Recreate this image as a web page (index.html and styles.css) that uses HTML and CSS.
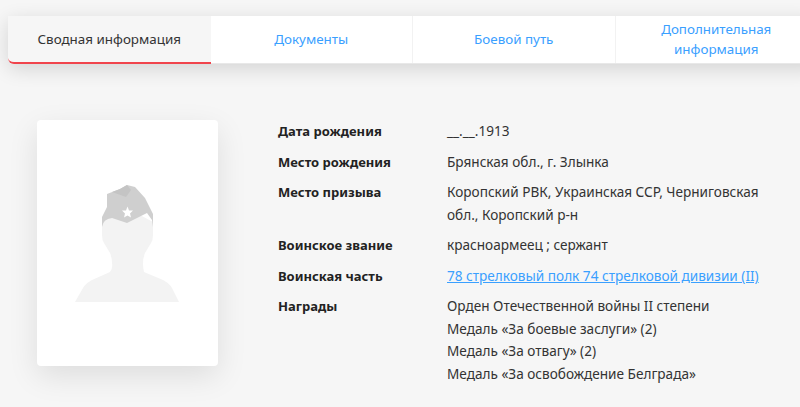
FILE: index.html
```html
<!DOCTYPE html>
<html lang="ru">
<head>
    <meta charset="UTF-8">
    <title>Сводная информация</title>
    <link rel="stylesheet" href="styles.css">
</head>
<body>
    <nav class="tabs">
        <a class="tab tab-active">Сводная информация</a>
        <a class="tab">Документы</a>
        <a class="tab">Боевой путь</a>
        <a class="tab">Дополнительная<br>информация</a>
    </nav>

    <main class="person">
        <div class="photo">
            <svg class="silhouette" viewBox="75 185 104 117" width="104" height="117" aria-hidden="true">
                <path fill="#f3f3f3" d="M75 302 L83 288 Q86 283 92 280 L110 272 Q113 268 112 263 Q112 258 110 253 L104 243 Q102 240 102 235 L102 222 L127 208 L153 222 L153 235 Q153 240 151 243 L145 253 Q143 258 143 263 Q143 268 144 272 L163 280 Q169 283 172 288 L179 302 Z"/>
                <path fill="#cfcfcf" d="M102 227 L102 217 L107 207 L107 194 L120 189 L127 185 L135 187 L145 198 L153 214 L153 227 L152 220 L147 213 L127 223 L112 218 Q103 219 102 227 Z"/>
                <path fill="#c4c4c4" d="M112 192 L120 189 L127 185 L131 190 L126 197 Z"/>
                <path fill="#fff" d="M127.500 206.500 L129 210.500 L133 210.500 L130 213.500 L131 217.500 L127.500 215.500 L124 217.500 L125 213.500 L122 210.500 L126 210.500 Z"/>
            </svg>
        </div>

        <div class="info">
            <div class="info-row">
                <div class="info-label">Дата рождения</div>
                <div class="info-value">__.__.1913</div>
            </div>
            <div class="info-row">
                <div class="info-label">Место рождения</div>
                <div class="info-value">Брянская обл., г. Злынка</div>
            </div>
            <div class="info-row">
                <div class="info-label">Место призыва</div>
                <div class="info-value">Коропский РВК, Украинская ССР, Черниговская обл., Коропский р-н</div>
            </div>
            <div class="info-row">
                <div class="info-label">Воинское звание</div>
                <div class="info-value">красноармеец ; сержант</div>
            </div>
            <div class="info-row">
                <div class="info-label">Воинская часть</div>
                <div class="info-value"><a class="info-link">78 стрелковый полк 74 стрелковой дивизии (II)</a></div>
            </div>
            <div class="info-row">
                <div class="info-label">Награды</div>
                <div class="info-value">
                    <div>Орден Отечественной войны II степени</div>
                    <div>Медаль «За боевые заслуги» (2)</div>
                    <div>Медаль «За отвагу» (2)</div>
                    <div>Медаль «За освобождение Белграда»</div>
                </div>
            </div>
        </div>
    </main>
</body>
</html>
```

FILE: styles.css
```css
:root {
    --text-color: #333333;
    --link-color: #3aa0ff;
    --bg-color: #f6f6f6;
}

html, body {
    height: 100%;
}

body {
    margin: 0;
    overflow: hidden;
    background-color: var(--bg-color);
    color: var(--text-color);
    font-family: "Noto Sans", sans-serif;
    font-size: 13.600px;
    line-height: 22.500px;
}

.tabs {
    display: grid;
    grid-template-columns: repeat(4, 202.500px);
    width: 810px;
    height: 47px;
    margin: 16px 0 0 8px;
    background-color: white;
    box-shadow: 0 5px 20px rgba(0, 0, 0, 0.14);
    border-bottom: 1px solid #e8e8e8;
    border-radius: 0 0 0 6px;
}

.tab {
    display: flex;
    align-items: center;
    justify-content: center;
    padding-bottom: 1px;
    text-align: center;
    font-size: 13.400px;
    line-height: 20px;
    color: var(--link-color);
    border-right: 1px solid #f2f2f2;
}

.tab-active {
    background-color: var(--bg-color);
    color: var(--text-color);
    border-right: none;
    border-bottom: 2px solid #f0444c;
    border-radius: 0 0 0 6px;
    margin-bottom: -1px;
}

.person {
    display: flex;
    margin: 56px 0 0 37px;
}

.photo {
    display: flex;
    justify-content: center;
    flex: none;
    width: 181px;
    height: 246px;
    background-color: white;
    border-radius: 4px;
    box-shadow: 0 10px 30px rgba(0, 0, 0, 0.1);
}

.silhouette {
    margin-top: 65px;
    margin-left: -1px;
}

.info {
    display: flex;
    flex-direction: column;
    gap: 8px;
    margin-left: 60px;
}

.info-row {
    display: flex;
}

.info-label {
    flex: none;
    width: 169px;
    font-size: 13px;
    font-weight: 700;
    color: #222222;
}

.info-value {
    width: 320px;
}

.info-link {
    color: var(--link-color);
    text-decoration: underline;
}
```
